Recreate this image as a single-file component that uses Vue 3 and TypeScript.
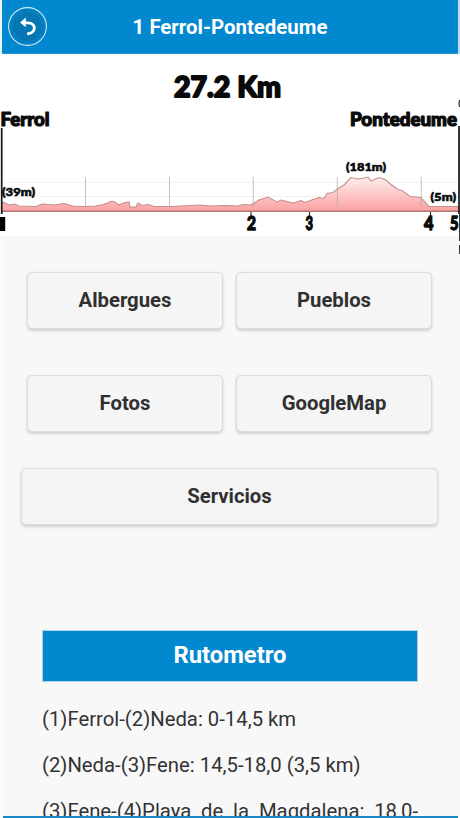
<script setup lang="ts">
interface ChartLabel {
  text: string
  x: number
  y: number
  size: number
  width: number
  stroke: number
}

const buttons: string[] = ['Albergues', 'Pueblos', 'Fotos', 'GoogleMap']

const stages: string[] = [
  '(1)Ferrol-(2)Neda: 0-14,5 km',
  '(2)Neda-(3)Fene: 14,5-18,0 (3,5 km)',
  '(3)Fene-(4)Playa de la Magdalena: 18,0-21,5 (3,5 km)',
]

const labels: ChartLabel[] = [
  { text: '27.2 Km', x: 174, y: 42.5, size: 28.5, width: 107, stroke: 1.8 },
  { text: 'Ferrol', x: 0.5, y: 71.5, size: 18.5, width: 49, stroke: 1.2 },
  { text: 'Pontedeume', x: 350, y: 71.5, size: 18, width: 107, stroke: 1.2 },
  { text: '(39m)', x: 2, y: 141.5, size: 11.5, width: 33, stroke: 0.6 },
  { text: '(181m)', x: 346, y: 117, size: 11.5, width: 40, stroke: 0.6 },
  { text: '(5m)', x: 430.5, y: 147, size: 11.5, width: 25.5, stroke: 0.6 },
  { text: '2', x: 247, y: 175.5, size: 18.5, width: 9, stroke: 1.3 },
  { text: '3', x: 305.5, y: 175.5, size: 18.5, width: 7.5, stroke: 1.3 },
  { text: '4', x: 424, y: 175.5, size: 18.5, width: 9.5, stroke: 1.3 },
  { text: '5', x: 450, y: 175.5, size: 18.5, width: 8.5, stroke: 1.3 },
]

const gridX: number[] = [85.5, 169.5, 253.3, 337.3, 421.3]

const ridge =
  '2,148 5,149 9,151 15,150 19,152 36,152.5 42,150 54,151 64,149.5 73,152 83,152.5 95,152 103,150.5 108,149 110,147.5 114,147.5 119,151 123,149 129,148 130,153 136,153 138,149 142,151.5 148,150.5 154,152.5 172,152.5 200,151 211,152 225,151.5 238,152 243,150.5 251,151 259,146 268,143 277,148 281,146 293,149 301,146.5 305,148.5 313,145.5 319,143.5 324,144.5 327,139.5 333,138.5 339,134 344,131 351,123.5 358,125 364,124 368,123 371,127 379,123.5 385,125.5 391,130.5 398,135.5 402,136.5 410,142.5 421,143.5 429,152.5 459,152.5'
</script>

<template>
  <div class="screen">
    <header class="bar">
      <button class="back" aria-label="Volver">
        <svg class="back-icon" viewBox="0 0 38 38">
          <circle class="ring" cx="19" cy="19" r="18.4" />
          <circle class="disc" cx="19" cy="19" r="14" />
          <path class="arrow-line" d="M16 15.4 H19.5 C27.8 15.4 28 25.7 18.6 26.2" />
          <path class="arrow-head" d="M11.8 15 L17.3 10.3 V19.8 Z" />
        </svg>
      </button>
      <h1 class="title">1 Ferrol-Pontedeume</h1>
    </header>

    <svg class="chart" viewBox="0 0 460 182">
      <defs>
        <linearGradient id="slope" x1="0" y1="123" x2="0" y2="156" gradientUnits="userSpaceOnUse">
          <stop offset="0" stop-color="#fdf0ee" />
          <stop offset="1" stop-color="#fba3a3" />
        </linearGradient>
      </defs>
      <path class="faint" d="M2 128.5H458M2 142.5H458" />
      <polygon :points="`2,157 ${ridge} 459,157`" fill="url(#slope)" />
      <line v-for="x in gridX" :key="x" class="grid" :x1="x" :x2="x" y1="123" y2="153" />
      <polyline class="ridge" :points="ridge" />
      <path class="base" d="M2 157.2H459" />
      <path class="edge" d="M1.7 74V160M459 72V160" />
      <path class="tick" d="M251 158V162M309.5 158V162M430.5 158V162" />
      <rect x="0" y="163" width="5.2" height="14" />
      <text
        v-for="l in labels"
        :key="l.text"
        class="label"
        :x="l.x"
        :y="l.y"
        :font-size="l.size"
        :stroke-width="l.stroke"
        :textLength="l.width"
        lengthAdjust="spacingAndGlyphs"
      >{{ l.text }}</text>
      <path class="mark" d="M460 46q-2 3 0 7M459.7 160V187M459.7 191V200" />
    </svg>

    <main class="content">
      <nav class="grid-buttons">
        <button v-for="b in buttons" :key="b" class="btn">{{ b }}</button>
      </nav>
      <button class="btn wide">Servicios</button>
      <section class="route">
        <h2 class="route-title">Rutometro</h2>
        <p v-for="s in stages" :key="s" class="stage">{{ s }}</p>
      </section>
    </main>
    <div class="footer-line"></div>
  </div>
</template>

<style>
body {
  margin: 0;
  overflow: hidden;
}
</style>

<style scoped>
.screen {
  box-sizing: border-box;
  width: 460px;
  height: 818px;
  overflow: hidden;
  display: flex;
  flex-direction: column;
  background: #fafafa;
  font-family: Roboto, sans-serif;
  color: #333;
}
.bar {
  flex: none;
  box-sizing: border-box;
  height: 54px;
  margin: 0 2px;
  padding: 0 45px 0 6px;
  display: flex;
  align-items: center;
  background: #0288ce;
  border-bottom: 1px solid #2b91c6;
  box-shadow: -2px 0 #eef5fa, 2px 0 #c3dced;
}
.back {
  width: 39px;
  height: 39px;
  padding: 0;
  border: 0;
  background: none;
}
.back-icon {
  display: block;
  width: 39px;
  height: 39px;
}
.ring {
  fill: #0480c2;
  stroke: #d4ebf7;
  stroke-width: 1;
}
.disc {
  fill: #0777b3;
}
.arrow-line {
  fill: none;
  stroke: #fff;
  stroke-width: 2.7;
}
.arrow-head {
  fill: #fff;
}
.title {
  flex: 1;
  margin: 0;
  text-align: center;
  font-size: 20.4px;
  font-weight: 700;
  color: #fff;
}
.chart {
  position: relative;
  flex: none;
  display: block;
  width: 460px;
  height: 182px;
  overflow: visible;
  background: #fff;
}
.faint {
  stroke: #f5f0f0;
}
.grid {
  stroke: #aaa0a0;
  stroke-opacity: 0.65;
}
.ridge {
  fill: none;
  stroke: #c48f8f;
  stroke-width: 1.1;
}
.base {
  stroke: #b07777;
  stroke-width: 1.5;
}
.edge {
  stroke: #151515;
  stroke-width: 1.7;
}
.tick {
  stroke: #333;
  stroke-width: 1.2;
}
.mark {
  fill: none;
  stroke: #222;
  stroke-width: 1.2;
}
.label {
  font-family: Lato, sans-serif;
  font-weight: 900;
  fill: #0a0a0a;
  stroke: #0a0a0a;
  stroke-linejoin: round;
}
.content {
  flex: 1;
  min-height: 0;
  overflow: hidden;
  margin-left: 3px;
  padding: 36px 22px 0 18px;
  background: #f8f8f8;
}
.grid-buttons {
  display: grid;
  grid-template-columns: 196px 196px;
  gap: 46px 13px;
  justify-content: center;
}
.btn {
  box-sizing: border-box;
  height: 57px;
  padding: 0 0 2px;
  border: 1px solid #dcdcdc;
  border-radius: 5px;
  background: #f5f5f5;
  box-shadow: 0 1.5px 3px rgba(0, 0, 0, 0.16);
  font-family: inherit;
  font-size: 20.3px;
  font-weight: 700;
  color: #303030;
}
.wide {
  display: block;
  width: 417px;
  height: 57px;
  margin-top: 36px;
}
.route {
  width: 376px;
  margin: 105px 0 0 21px;
}
.route-title {
  box-sizing: border-box;
  height: 52px;
  margin: 0 0 22px;
  border: 1px solid #a9cfe4;
  background: #0288ce;
  color: #fff;
  font-size: 23.8px;
  line-height: 49px;
  font-weight: 700;
  text-align: center;
}
.stage {
  margin: 0 0 16px;
  font-size: 20.3px;
  line-height: 30px;
  text-align: justify;
}
.footer-line {
  flex: none;
  height: 2px;
  margin: 0 2px 0 3px;
  background: #1887c3;
}
</style>
